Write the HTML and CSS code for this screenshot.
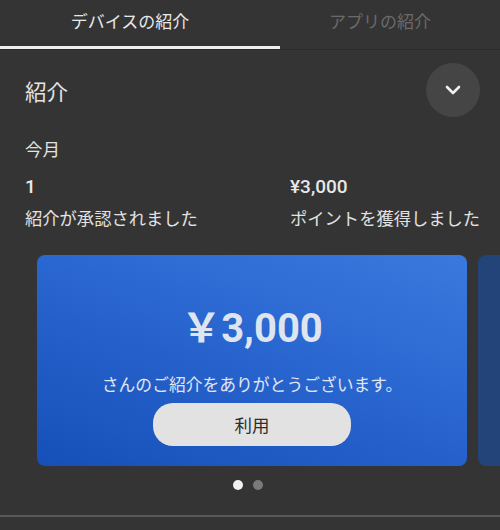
FILE: index.html
```html
<!DOCTYPE html>
<html lang="ja">
<head>
  <meta charset="UTF-8" />
  <title>紹介</title>
  <link rel="stylesheet" href="styles.css">
</head>
<body>

<div class="tabs">
  <div class="tab active">デバイスの紹介</div>
  <div class="tab">アプリの紹介</div>
</div>
<div class="tab-line"><div class="indicator"></div></div>

<div class="head">
  <h2>紹介</h2>
  <button class="toggle" aria-label="開く">
    <svg width="16" height="10" viewBox="0 0 16 10">
      <path d="M2 2 L8 8 L14 2" fill="none" stroke="#f0f0f0" stroke-width="2.6" stroke-linecap="round" stroke-linejoin="round"/>
    </svg>
  </button>
</div>

<div class="month">今月</div>

<div class="stats">
  <div class="stat">
    <div class="value">1</div>
    <div class="caption">紹介が承認されました</div>
  </div>
  <div class="stat">
    <div class="value">¥3,000</div>
    <div class="caption">ポイントを獲得しました</div>
  </div>
</div>

<div class="carousel">
  <div class="card">
    <div class="amount">￥3,000</div>
    <div class="thanks">さんのご紹介をありがとうございます。</div>
    <button class="use">利用</button>
  </div>
  <div class="card next"></div>
</div>

<div class="dots">
  <span class="dot on"></span>
  <span class="dot"></span>
</div>

<div class="bottom-line"></div>

</body>
</html>
```

FILE: styles.css
```css
body {
  margin: 0;
  width: 500px;
  height: 530px;
  overflow: hidden;
  background: #343434;
  color: #e2e2e2;
  font-family: Roboto, "Noto Sans CJK JP", sans-serif;
}

/* tabs */
.tabs {
  display: grid;
  grid-template-columns: 260px 1fr;
  height: 46px;
}

.tab {
  display: flex;
  align-items: center;
  justify-content: center;
  padding-bottom: 6px;
  font-size: 17px;
  color: #6a6a6a;
}

.tab.active { color: #e8e8e8; }

.tab-line {
  height: 3px;
  border-bottom: 1px solid #2b2b2b;
}

.indicator {
  width: 280px;
  height: 3px;
  background: #f0f0f0;
}

/* header */
.head {
  display: flex;
  justify-content: space-between;
  align-items: center;
  padding: 13px 20px 0 25px;
}

.head h2 {
  margin: 0;
  font-size: 21.5px;
  font-weight: 400;
  color: #e4e4e4;
}

.toggle {
  width: 54px;
  height: 54px;
  border-radius: 50%;
  border: none;
  background: #454545;
  display: flex;
  align-items: center;
  justify-content: center;
  padding: 0;
}

.month {
  margin: 21px 0 0 25px;
  font-size: 17.5px;
  line-height: 24px;
}

.stats {
  display: grid;
  grid-template-columns: 265px 1fr;
  padding-left: 25px;
  margin-top: 13px;
}

.value {
  font-size: 19px;
  font-weight: 500;
  line-height: 24px;
  color: #e8e8e8;
}

.caption {
  margin-top: 8px;
  font-size: 17.3px;
  line-height: 24px;
  white-space: nowrap;
}

/* carousel */
.carousel {
  display: flex;
  gap: 11px;
  padding-left: 37px;
  margin-top: 24px;
  overflow: hidden;
}

.card {
  flex-shrink: 0;
  width: 430px;
  height: 211px;
  box-sizing: border-box;
  border-radius: 8px;
  background: linear-gradient(20deg, #164fb8, #2a66d0 55%, #3a79de);
  display: flex;
  flex-direction: column;
  align-items: center;
  justify-content: flex-end;
  padding-bottom: 20px;
}

.card.next {
  background: #234479;
}

.amount {
  font-size: 40px;
  font-weight: 700;
  line-height: 48px;
  color: #dfe5ef;
}

.thanks {
  margin-top: 20px;
  font-size: 16.8px;
  line-height: 24px;
  color: #e0e6f0;
}

.use {
  margin-top: 6px;
  width: 198px;
  height: 43px;
  border: none;
  border-radius: 20px;
  background: #e2e2e2;
  color: #2e2e2e;
  font-family: inherit;
  font-size: 17.5px;
}

.dots {
  display: flex;
  justify-content: center;
  gap: 10px;
  margin-top: 14px;
  padding-right: 4px;
}

.dot {
  width: 10px;
  height: 10px;
  border-radius: 50%;
  background: #7a7a7a;
}

.dot.on { background: #f0f0f0; }

.bottom-line {
  margin-top: 25px;
  height: 2px;
  background: #595959;
}
```
